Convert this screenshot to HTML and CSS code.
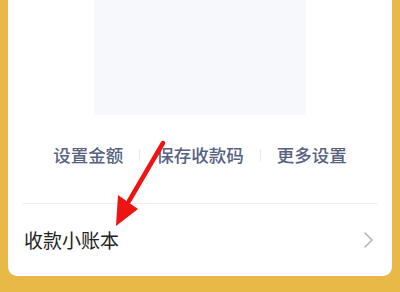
FILE: index.html
```html
<!DOCTYPE html>
<html lang="zh-CN">
<head>
<meta charset="utf-8">
<link rel="stylesheet" href="styles.css">
</head>
<body>
<div class="card">
  <div class="qr"></div>
  <div class="links">
    <span class="link">设置金额</span>
    <span class="sep"></span>
    <span class="link">保存收款码</span>
    <span class="sep"></span>
    <span class="link">更多设置</span>
  </div>
  <div class="rule"></div>
  <div class="item">
    <span class="item-label">收款小账本</span>
    <svg class="chev" width="9" height="16" viewBox="0 0 9 16"><path d="M1 1 L8 8 L1 15" fill="none" stroke="#b3b3b3" stroke-width="1.5" stroke-linecap="round" stroke-linejoin="round"/></svg>
  </div>
</div>
<svg class="arrow" width="400" height="292" viewBox="0 0 400 292">
  <line x1="163" y1="143" x2="129" y2="201" stroke="#ee1414" stroke-width="4.5" stroke-linecap="round"/>
  <polygon points="116,226 118,195 138,209" fill="#ee1414"/>
</svg>
</body>
</html>
```
FILE: styles.css
```css
html, body {
  margin: 0;
  padding: 0;
}
body {
  width: 400px;
  height: 292px;
  background: #e8b946;
  font-family: "Noto Sans CJK SC", "Noto Sans", sans-serif;
  position: relative;
  overflow: hidden;
}
.card {
  margin: 0 8px;
  height: 276px;
  background: #ffffff;
  border-radius: 0 0 9px 9px;
  display: flex;
  flex-direction: column;
}
.qr {
  width: 212px;
  height: 115px;
  margin: 0 auto;
  background: #f6f8fb;
  flex: none;
}
.links {
  margin-top: 28px;
  height: 24px;
  display: flex;
  justify-content: center;
  align-items: center;
  flex: none;
}
.link {
  font-size: 17.5px;
  font-weight: 500;
  line-height: 24px;
  color: #56627f;
  white-space: nowrap;
}
.sep {
  width: 1px;
  height: 12px;
  background: #e8e9ee;
  margin: 0 16px;
}
.rule {
  margin: 36px 14px 0;
  height: 1px;
  background: #efefef;
  flex: none;
}
.item {
  flex: 1;
  display: flex;
  align-items: center;
  justify-content: space-between;
  padding: 0 19px 0 16px;
}
.item-label {
  font-size: 19px;
  color: #222222;
  line-height: 26px;
}
.chev {
  display: block;
}
.arrow {
  position: absolute;
  left: 0;
  top: 0;
  pointer-events: none;
}
```
